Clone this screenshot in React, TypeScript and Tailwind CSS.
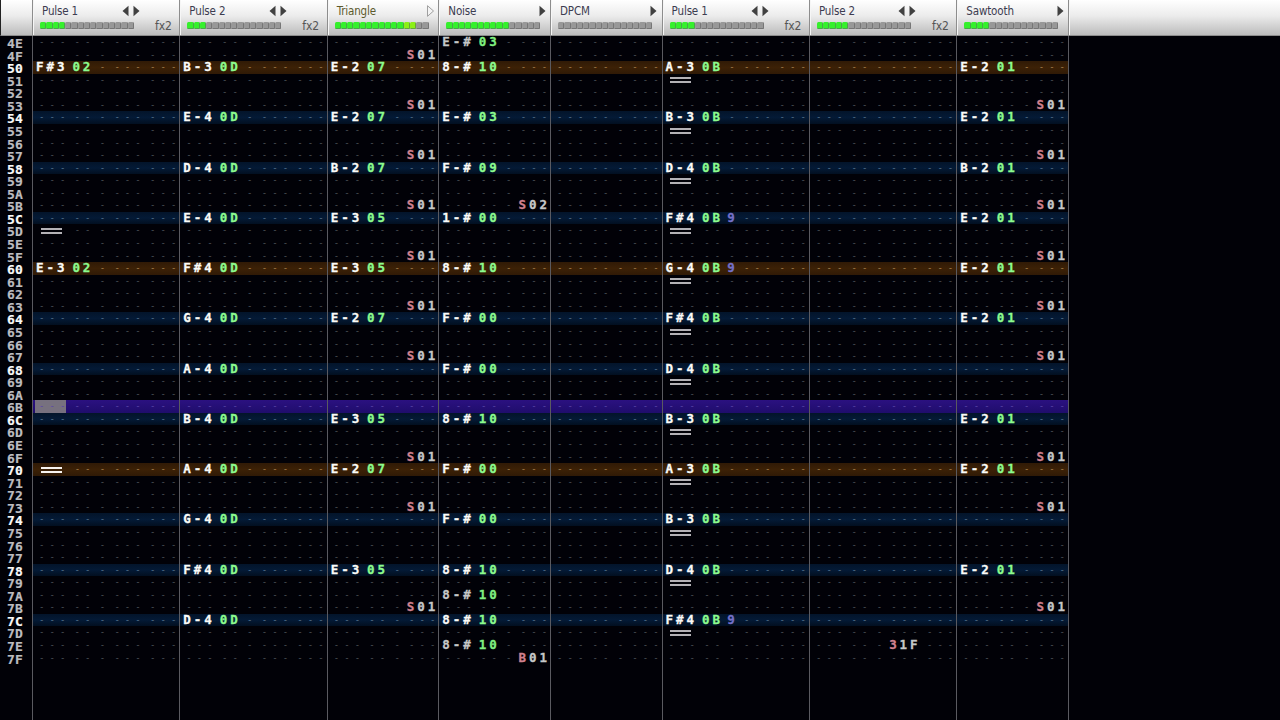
import React from 'react';
import clsx from 'clsx';

interface Channel {
  name: string;
  level: number;
  fx: number;
  arrows: 'both' | 'right' | 'outline';
  rows: Record<string, string>;
}

// Row format: "NNN II V EEE EEE", a dot stands for an empty character.
const every = (rows: string[], value: string) => Object.fromEntries(rows.map((row) => [row, value]));

const CUTS = ['4F', '53', '57', '5B', '5F', '63', '67', '6F', '73', '7B'];
const HALT = '===';

const channels: Channel[] = [
  {
    name: 'Pulse 1',
    level: 4,
    fx: 2,
    arrows: 'both',
    rows: { '50': 'F#3 02', '5D': HALT, '60': 'E-3 02', '70': HALT },
  },
  {
    name: 'Pulse 2',
    level: 3,
    fx: 2,
    arrows: 'both',
    rows: {
      '50': 'B-3 0D', '54': 'E-4 0D', '58': 'D-4 0D', '5C': 'E-4 0D',
      '60': 'F#4 0D', '64': 'G-4 0D', '68': 'A-4 0D', '6C': 'B-4 0D',
      '70': 'A-4 0D', '74': 'G-4 0D', '78': 'F#4 0D', '7C': 'D-4 0D',
    },
  },
  {
    name: 'Triangle',
    level: 13,
    fx: 1,
    arrows: 'outline',
    rows: {
      ...every(CUTS, '... .. . S01'),
      '50': 'E-2 07', '54': 'E-2 07', '58': 'B-2 07', '5C': 'E-3 05',
      '60': 'E-3 05', '64': 'E-2 07', '6C': 'E-3 05', '70': 'E-2 07', '78': 'E-3 05',
    },
  },
  {
    name: 'Noise',
    level: 10,
    fx: 1,
    arrows: 'right',
    rows: {
      '4E': 'E-# 03', '50': '8-# 10', '54': 'E-# 03', '58': 'F-# 09',
      '5B': '... .. . S02', '5C': '1-# 00', '60': '8-# 10', '64': 'F-# 00',
      '68': 'F-# 00', '6C': '8-# 10', '70': 'F-# 00', '74': 'F-# 00',
      '78': '8-# 10', '7A': '8-# 10', '7C': '8-# 10', '7E': '8-# 10',
      '7F': '... .. . B01',
    },
  },
  { name: 'DPCM', level: 0, fx: 1, arrows: 'right', rows: {} },
  {
    name: 'Pulse 1',
    level: 4,
    fx: 2,
    arrows: 'both',
    rows: {
      ...every(['51', '55', '59', '5D', '61', '65', '69', '6D', '71', '75', '79', '7D'], HALT),
      '50': 'A-3 0B', '54': 'B-3 0B', '58': 'D-4 0B', '5C': 'F#4 0B 9',
      '60': 'G-4 0B 9', '64': 'F#4 0B', '68': 'D-4 0B', '6C': 'B-3 0B',
      '70': 'A-3 0B', '74': 'B-3 0B', '78': 'D-4 0B', '7C': 'F#4 0B 9',
    },
  },
  { name: 'Pulse 2', level: 5, fx: 2, arrows: 'both', rows: { '7E': '... .. . 31F' } },
  {
    name: 'Sawtooth',
    level: 4,
    fx: 1,
    arrows: 'right',
    rows: {
      ...every(CUTS.slice(1), '... .. . S01'),
      ...every(['50', '54', '5C', '60', '64', '6C', '70', '78'], 'E-2 01'),
      '58': 'B-2 01',
    },
  },
];

const FIRST_ROW = 0x4e;
const rowIds = Array.from({ length: 50 }, (_, i) => (FIRST_ROW + i).toString(16).toUpperCase());
const CURSOR = '6B';

const isBar = (id: string) => parseInt(id, 16) % 16 === 0;
const isBeat = (id: string) => parseInt(id, 16) % 4 === 0;

const rowBackground = (id: string) => {
  if (id === CURSOR) return 'bg-linear-to-b from-[#2b1180] to-[#1f0d6c]';
  if (isBar(id)) return 'bg-linear-to-b from-[#301a06] via-[#3c2106] to-[#301a06]';
  if (isBeat(id)) return 'bg-linear-to-b from-[#03142a] via-[#041a36] to-[#020f20]';
  return '';
};

const dashColor = (id: string) => {
  if (id === CURSOR) return 'text-[#5a45a8]';
  if (isBar(id)) return 'text-[#a88250]';
  if (isBeat(id)) return 'text-[#58748e]';
  return 'text-[#50565c]';
};

const textColor = (id: string, group: number, index: number) => {
  const bright = isBeat(id);
  if (group === 1) return bright ? 'text-[#8cfb8e]' : 'text-[#80f080]';
  if (group === 2) return 'text-[#7470c8]';
  if (group >= 3 && index === 0) return 'text-[#d0808e]';
  return bright ? 'text-[#fbfbf8]' : 'text-[#c6c8c8]';
};

const channelWidth = (fx: number) => (fx === 2 ? 'w-[147.35px]' : 'w-[111.65px]');

const Arrow: React.FC<{ left?: boolean; outline?: boolean }> = ({ left, outline }) => (
  <svg
    viewBox="0 0 7 12"
    className={clsx('h-[12px] w-[7px]', left && '-scale-x-100')}
    fill={outline ? '#f4f4f4' : '#414141'}
    stroke={outline ? '#8a8a8a' : 'none'}
    strokeWidth="0.8"
  >
    <path d="M0.5 0.7 L6.5 6 L0.5 11.3 Z" />
  </svg>
);

const Meter: React.FC<{ level: number }> = ({ level }) => (
  <div className="flex h-[7px] w-[94px]">
    {Array.from({ length: 15 }, (_, i) => (
      <div
        key={i}
        className={clsx(
          'h-full flex-1 rounded-[1.5px] border-r border-b',
          i >= level && 'border-[#767676] bg-[#989898]',
          i < level && i < 11 && 'border-[#48a848] bg-[#35f02c]',
          i < level && i >= 11 && 'border-[#66a838] bg-[#8cf016]',
        )}
      />
    ))}
  </div>
);

const ChannelHeader: React.FC<{ channel: Channel }> = ({ channel }) => (
  <div
    className={clsx(
      'h-full shrink-0 border-l border-l-[#8d8d8d] pt-[4px] pl-[7px] shadow-[inset_1px_0_0_#f6f6f6]',
      channelWidth(channel.fx),
    )}
  >
    <div className="flex h-[14px] items-center">
      <span
        className={clsx(
          "w-[81.5px] pl-[2px] font-['DejaVu_Sans_Condensed','DejaVu_Sans',sans-serif] text-[11.5px] leading-[14px] tracking-[-0.15px] whitespace-nowrap",
          channel.arrows === 'outline' ? 'text-[#5c5a2c]' : 'text-[#3c3c50]',
        )}
      >
        {channel.name}
      </span>
      {channel.arrows === 'both' ? (
        <span className="flex gap-[4px]">
          <Arrow left />
          <Arrow />
        </span>
      ) : (
        <span className="ml-[11px]">
          <Arrow outline={channel.arrows === 'outline'} />
        </span>
      )}
    </div>
    <div className="flex items-start pt-[4px]">
      <Meter level={channel.level} />
      {channel.fx === 2 && (
        <span className="pt-px pl-[21px] font-['DejaVu_Sans_Condensed','DejaVu_Sans',sans-serif] text-[12px] leading-[7px] tracking-[-0.1px] text-[#555]">
          fx2
        </span>
      )}
    </div>
  </div>
);

const Halt: React.FC<{ bright: boolean }> = ({ bright }) => (
  <div className="flex w-[31.44px] flex-col items-center gap-[2px] pt-px pl-px">
    <div className={clsx('h-[2px] w-[21px]', bright ? 'bg-[#f8f4f0]' : 'bg-[#b4b2b6]')} />
    <div className={clsx('h-[2px] w-[21px]', bright ? 'bg-[#f8f4f0]' : 'bg-[#b4b2b6]')} />
  </div>
);

const PatternCell: React.FC<{ id: string; channel: Channel; cursor: boolean }> = ({ id, channel, cursor }) => {
  const template = channel.fx === 2 ? ['...', '..', '.', '...', '...'] : ['...', '..', '.', '...'];
  const parts = (channel.rows[id] ?? '').split(' ');

  return (
    <div className="flex h-[12.57px] items-center gap-[4.19px] pl-[2px]">
      {template.map((empty, group) => {
        const value = parts[group] || empty;
        if (value === HALT) return <Halt key={group} bright={isBeat(id)} />;
        return (
          <div key={group} className={clsx('flex h-full items-center', cursor && group === 0 && 'bg-[#77717f]')}>
            {value.split('').map((char, index) => (
              <span
                key={index}
                className={clsx(
                  'w-[10.48px]',
                  char === '.'
                    ? ['pl-[4px] text-[9px] font-normal', dashColor(id)]
                    : ['[-webkit-text-stroke:0.3px]', group === 0 ? 'pl-[1px]' : 'pl-[1.8px]', textColor(id, group, index)],
                )}
              >
                {char === '.' ? '-' : char}
              </span>
            ))}
          </div>
        );
      })}
    </div>
  );
};

const App: React.FC = () => (
  <div className="flex h-[720px] w-[1280px] flex-col overflow-hidden bg-[#010107]">
    {/* Channel headers */}
    <div className="flex h-[36px] shrink-0 border-b border-l border-b-[#8c8c8c] border-l-[#222] bg-linear-to-b from-white via-[#ececec] via-45% to-[#bcbcbc]">
      <div className="w-[31px] shrink-0" />
      {channels.map((channel, i) => (
        <ChannelHeader key={i} channel={channel} />
      ))}
      <div className="flex-1 border-l border-l-[#8d8d8d] shadow-[inset_1px_0_0_#f6f6f6]" />
    </div>

    {/* Pattern */}
    <div className="flex flex-1 font-['DejaVu_Sans_Mono',monospace] text-[12.5px] leading-[12.57px] font-bold">
      <div className="w-[32px] shrink-0 pt-[2px] pl-[7px]">
        {rowIds.map((id) => (
          <div
            key={id}
            className={clsx(
              'h-[12.57px] text-[13px] tracking-[0.2px] [-webkit-text-stroke:0.2px]',
              isBeat(id) ? 'text-[#fafafa]' : 'text-[#bcbcc0]',
            )}
          >
            {id}
          </div>
        ))}
      </div>
      {channels.map((channel, i) => (
        <div key={i} className={clsx('shrink-0 border-l border-l-[#5a5a60]', channelWidth(channel.fx))}>
          {rowIds.map((id) => (
            <div key={id} className={rowBackground(id)}>
              <PatternCell id={id} channel={channel} cursor={i === 0 && id === CURSOR} />
            </div>
          ))}
        </div>
      ))}
      <div className="flex-1 border-l border-l-[#5a5a60]" />
    </div>
  </div>
);

export default App;
